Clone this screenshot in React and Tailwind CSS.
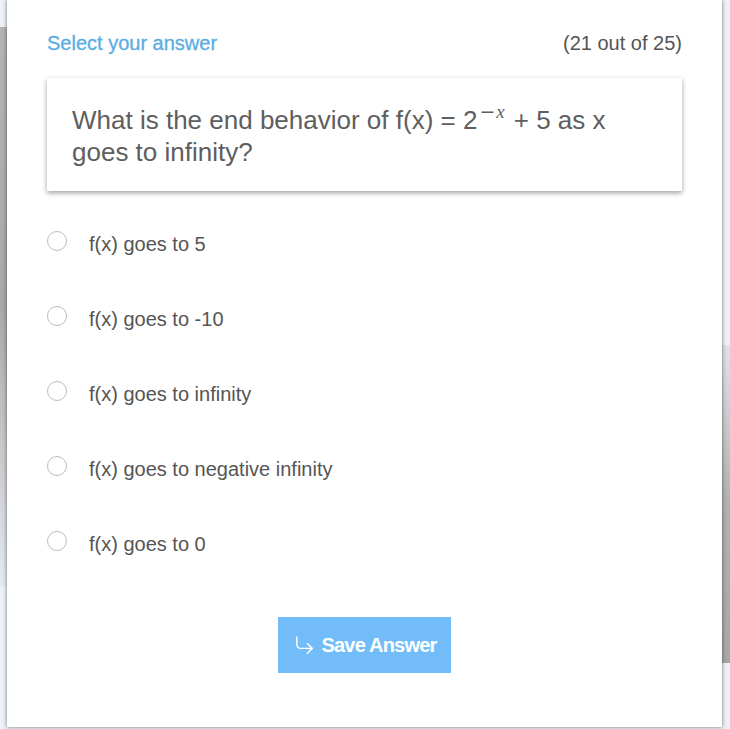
import React from "react";

const options = [
  "f(x) goes to 5",
  "f(x) goes to -10",
  "f(x) goes to infinity",
  "f(x) goes to negative infinity",
  "f(x) goes to 0",
];

export default function App() {
  return (
    <div
      className="relative w-[730px] h-[729px] overflow-hidden bg-[#eef2f6]"
      style={{ fontFamily: '"Liberation Sans", Arial, sans-serif' }}
    >
      {/* decorative background behind the card */}
      <div className="absolute left-0 top-[27px] w-[12px] h-[560px] bg-gradient-to-b from-[#b4b4b4] via-[#a9a9a9] to-[#e6ebf0]" />
      <div className="absolute right-0 top-[345px] w-[12px] h-[318px] bg-gradient-to-b from-[#dfe4ea] via-[#b2b2b2] to-[#a8a8a8]" />

      <div className="relative ml-[7px] w-[715px] h-[727px] bg-white shadow-[0_0_4px_rgba(0,0,0,0.55)] px-[40px] pt-[30px] flex flex-col">
        <div className="flex items-center justify-between h-[26px]">
          <span className="text-[20px] text-[#5aade3] [-webkit-text-stroke:0.3px_#5aade3]">Select your answer</span>
          <span className="text-[20px] text-[#555]">(21 out of 25)</span>
        </div>

        <div className="mt-[22px] bg-white shadow-[0_2px_5px_rgba(0,0,0,0.38)] pl-[25px] pr-[25px] pt-[26px] pb-[23px] text-[26px] leading-[32px] text-[#5e5e5e]">
          What is the end behavior of f(x) = 2
          <sup
            className="relative top-[-11px] text-[19px] ml-[2px] mr-[8px] tracking-[1px]"
            style={{ fontFamily: '"DejaVu Serif", "Liberation Serif", serif' }}
          >
            −<span className="italic" style={{ fontFamily: '"Liberation Serif", serif' }}>x</span>
          </sup>
          + 5 as x goes to infinity?
        </div>

        <div className="mt-[37px] flex flex-col gap-[49px]">
          {options.map((o) => (
            <div key={o} className="flex items-center h-[26px]">
              <span className="w-[20px] h-[20px] rounded-full border border-[#bcbcbc] bg-white" />
              <span className="ml-[22px] mt-[5px] text-[20px] text-[#555]">{o}</span>
            </div>
          ))}
        </div>

        <div className="mt-[63px] flex justify-center">
          <button className="w-[173px] h-[56px] bg-[#72bdf9] text-white flex items-center justify-center gap-[6px]">
            <svg width="23" height="23" viewBox="0 0 24 24" fill="none" stroke="white" strokeWidth="1.5" strokeLinecap="round" strokeLinejoin="round">
              <polyline points="15 10 20 15 15 20" />
              <path d="M4 3v8a4 4 0 0 0 4 4h12" />
            </svg>
            <span className="text-[20px] font-bold tracking-[-0.8px]">Save Answer</span>
          </button>
        </div>
      </div>
    </div>
  );
}
